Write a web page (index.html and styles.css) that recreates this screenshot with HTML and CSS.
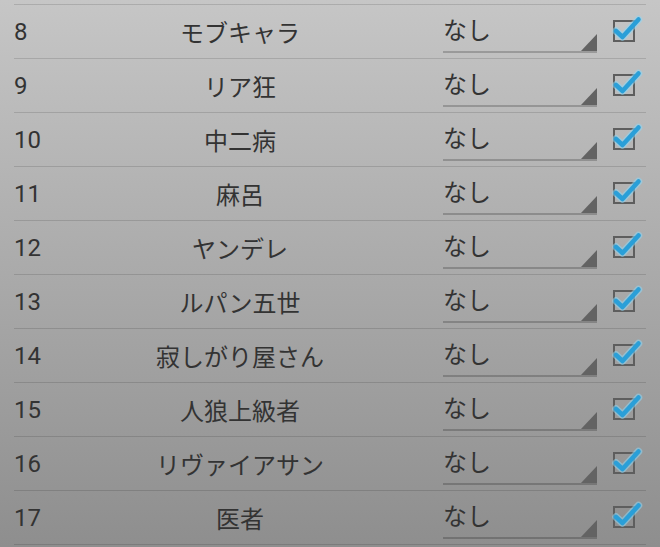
FILE: index.html
```html
<!DOCTYPE html>
<html lang="ja">
<head>
<meta charset="utf-8">
<link rel="stylesheet" href="styles.css">
</head>
<body>
<div class="list">
  <div class="row"><span class="num">8</span><span class="name">モブキャラ</span><span class="spinner">なし</span><span class="check"><svg viewBox="0 0 30 30" width="30" height="30"><path class="glow" d="M3 15 L9.5 21 L25.5 3.5"/><path class="tick" d="M3 15 L9.5 21 L25.5 3.5"/></svg></span></div>
  <div class="row"><span class="num">9</span><span class="name">リア狂</span><span class="spinner">なし</span><span class="check"><svg viewBox="0 0 30 30" width="30" height="30"><path class="glow" d="M3 15 L9.5 21 L25.5 3.5"/><path class="tick" d="M3 15 L9.5 21 L25.5 3.5"/></svg></span></div>
  <div class="row"><span class="num">10</span><span class="name">中二病</span><span class="spinner">なし</span><span class="check"><svg viewBox="0 0 30 30" width="30" height="30"><path class="glow" d="M3 15 L9.5 21 L25.5 3.5"/><path class="tick" d="M3 15 L9.5 21 L25.5 3.5"/></svg></span></div>
  <div class="row"><span class="num">11</span><span class="name">麻呂</span><span class="spinner">なし</span><span class="check"><svg viewBox="0 0 30 30" width="30" height="30"><path class="glow" d="M3 15 L9.5 21 L25.5 3.5"/><path class="tick" d="M3 15 L9.5 21 L25.5 3.5"/></svg></span></div>
  <div class="row"><span class="num">12</span><span class="name">ヤンデレ</span><span class="spinner">なし</span><span class="check"><svg viewBox="0 0 30 30" width="30" height="30"><path class="glow" d="M3 15 L9.5 21 L25.5 3.5"/><path class="tick" d="M3 15 L9.5 21 L25.5 3.5"/></svg></span></div>
  <div class="row"><span class="num">13</span><span class="name">ルパン五世</span><span class="spinner">なし</span><span class="check"><svg viewBox="0 0 30 30" width="30" height="30"><path class="glow" d="M3 15 L9.5 21 L25.5 3.5"/><path class="tick" d="M3 15 L9.5 21 L25.5 3.5"/></svg></span></div>
  <div class="row"><span class="num">14</span><span class="name">寂しがり屋さん</span><span class="spinner">なし</span><span class="check"><svg viewBox="0 0 30 30" width="30" height="30"><path class="glow" d="M3 15 L9.5 21 L25.5 3.5"/><path class="tick" d="M3 15 L9.5 21 L25.5 3.5"/></svg></span></div>
  <div class="row"><span class="num">15</span><span class="name">人狼上級者</span><span class="spinner">なし</span><span class="check"><svg viewBox="0 0 30 30" width="30" height="30"><path class="glow" d="M3 15 L9.5 21 L25.5 3.5"/><path class="tick" d="M3 15 L9.5 21 L25.5 3.5"/></svg></span></div>
  <div class="row"><span class="num">16</span><span class="name">リヴァイアサン</span><span class="spinner">なし</span><span class="check"><svg viewBox="0 0 30 30" width="30" height="30"><path class="glow" d="M3 15 L9.5 21 L25.5 3.5"/><path class="tick" d="M3 15 L9.5 21 L25.5 3.5"/></svg></span></div>
  <div class="row"><span class="num">17</span><span class="name">医者</span><span class="spinner">なし</span><span class="check"><svg viewBox="0 0 30 30" width="30" height="30"><path class="glow" d="M3 15 L9.5 21 L25.5 3.5"/><path class="tick" d="M3 15 L9.5 21 L25.5 3.5"/></svg></span></div>
</div>
</body>
</html>
```
FILE: styles.css
```css
html, body {
  margin: 0;
  padding: 0;
}
body {
  width: 660px;
  height: 547px;
  overflow: hidden;
  background: linear-gradient(#c6c6c6, #8e8e8e);
  font-family: Roboto, "Noto Sans CJK JP", sans-serif;
  color: #333333;
}
.list {
  margin: 4px 14px 0 14px;
  border-top: 1px solid rgba(0, 0, 0, 0.13);
}
.row {
  display: grid;
  grid-template-columns: 54px 344px 146px 22px;
  align-items: center;
  height: 53px;
  border-bottom: 1px solid rgba(0, 0, 0, 0.13);
}
.num {
  font-size: 24px;
}
.name {
  font-size: 24px;
  text-align: center;
}
.spinner {
  grid-column: 3;
  margin-left: 31px;
  width: 154px;
  position: relative;
  font-size: 24px;
  height: 48px;
  padding-top: 8px;
  line-height: 36px;
  box-sizing: border-box;
  border-bottom: 2px solid rgba(0, 0, 0, 0.2);
  align-self: start;
}
.spinner::after {
  content: "";
  position: absolute;
  right: 0;
  bottom: 0;
  width: 0;
  height: 0;
  border-left: 16px solid transparent;
  border-bottom: 17px solid #636363;
}
.check {
  grid-column: 4;
  margin-left: 55px;
  width: 22px;
  height: 22px;
  box-sizing: border-box;
  border: 2px solid #5e5e5e;
  position: relative;
  margin-top: -2px;
}
.check svg {
  position: absolute;
  left: -2px;
  top: -6px;
  overflow: visible;
}
.check .glow {
  fill: none;
  stroke: rgba(140, 215, 245, 0.55);
  stroke-width: 7.5;
  stroke-linecap: round;
  stroke-linejoin: round;
}
.check .tick {
  fill: none;
  stroke: #2a9fd8;
  stroke-width: 4.5;
  stroke-linecap: round;
  stroke-linejoin: round;
}
```
